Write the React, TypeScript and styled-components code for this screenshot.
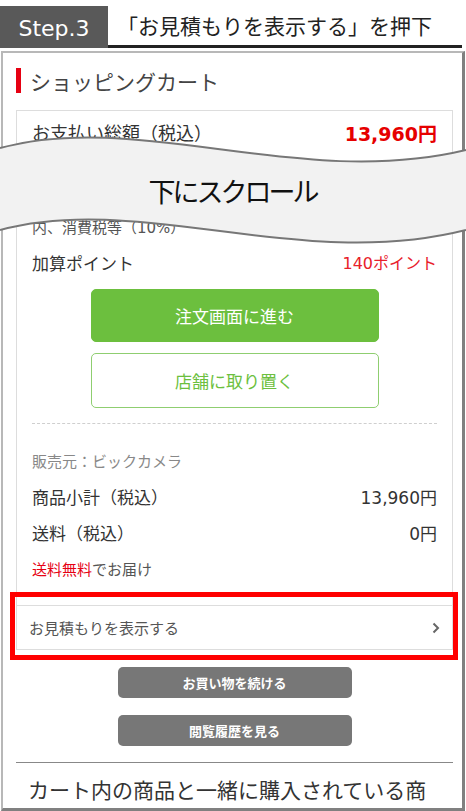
import React from "react";
import styled, { createGlobalStyle } from "styled-components";

const GlobalStyle = createGlobalStyle`
  html, body { margin: 0; padding: 0; background: #fff; }
  body {
    font-family: "DejaVu Sans", "Noto Sans CJK JP", sans-serif;
    color: #333;
    width: 466px;
    height: 811px;
    overflow: hidden;
  }
  * { box-sizing: border-box; }
`;

const Page = styled.div`
  position: relative;
  width: 466px;
  height: 811px;
  overflow: hidden;
`;

const Header = styled.header`
  display: flex;
  align-items: stretch;
  padding-top: 6px;
  height: 48px;
`;

const StepBadge = styled.div`
  width: 108px;
  background: #595959;
  color: #fff;
  font-size: 22px;
  display: flex;
  align-items: center;
  justify-content: center;
  padding-top: 2px;
`;

const HeaderTitle = styled.h1`
  flex: 1;
  margin: 0 4px 0 0;
  padding-left: 9px;
  border-bottom: 3px solid #222;
  font-family: "Noto Sans CJK JP", sans-serif;
  font-size: 21px;
  font-weight: normal;
  color: #222;
  line-height: 38px;
  white-space: nowrap;
`;

const Frame = styled.section`
  margin: 3px 1px 0 1px;
  height: 760px;
  border: 2px solid #b8b8b8;
  border-right: 3px solid #808080;
  border-bottom: 3px solid #808080;
  overflow: hidden;
  padding: 0 9px 0 13px;
`;

const SectionTitle = styled.h2`
  display: flex;
  align-items: center;
  gap: 9px;
  margin: 15px 0 17px;
  height: 25px;
  font-family: "Noto Sans CJK JP", sans-serif;
  font-size: 21px;
  font-weight: normal;
  color: #444;
  &::before {
    content: "";
    width: 5px;
    height: 25px;
    background: #e60012;
  }
`;

const Card = styled.div`
  border: 1px solid #ddd;
  padding: 0 15px;
`;

const Row = styled.div<{ $h: number; $size: number; $color?: string }>`
  display: flex;
  justify-content: space-between;
  align-items: center;
  height: ${(p) => p.$h}px;
  font-size: ${(p) => p.$size}px;
  color: ${(p) => p.$color ?? "#333"};
  white-space: nowrap;
`;

const Value = styled.span<{ $size: number; $bold?: boolean; $color?: string }>`
  font-size: ${(p) => p.$size}px;
  font-weight: ${(p) => (p.$bold ? "bold" : "normal")};
  color: ${(p) => p.$color ?? "#333"};
`;

const Red = styled.span`
  color: #e60012;
`;

const CutGap = styled.div`
  height: 61px;
`;

const ButtonStack = styled.div`
  display: flex;
  flex-direction: column;
  align-items: center;
  gap: 11px;
  margin-top: 3px;
`;

const GreenButton = styled.button<{ $outline?: boolean }>`
  width: 288px;
  height: ${(p) => (p.$outline ? 55 : 53)}px;
  border-radius: 5px;
  border: 1px solid ${(p) => (p.$outline ? "#8fce70" : "#6cbf3e")};
  background: ${(p) => (p.$outline ? "#fff" : "#6cbf3e")};
  color: ${(p) => (p.$outline ? "#6cbf3e" : "#fff")};
  font-family: "Noto Sans CJK JP", sans-serif;
  font-size: 17px;
  padding: 0;
  cursor: pointer;
`;

const Dashed = styled.hr`
  margin: 15px 0 18px;
  border: none;
  border-top: 1px dashed #cfcfcf;
  height: 0;
`;

const EstimateRow = styled.div`
  position: relative;
  display: flex;
  align-items: center;
  justify-content: space-between;
  margin: 19px -15px 0;
  height: 44px;
  border-top: 1px solid #ddd;
  padding: 0 12px 0 12px;
  font-size: 15px;
  color: #555;
`;

const Highlight = styled.div`
  position: absolute;
  left: -7px;
  right: -6px;
  top: -14px;
  bottom: -11px;
  border: 5px solid #ff0000;
  pointer-events: none;
`;

const Actions = styled.div`
  display: flex;
  flex-direction: column;
  align-items: center;
  gap: 17px;
  margin-top: 17px;
`;

const GrayButton = styled.button`
  width: 234px;
  height: 31px;
  border: none;
  border-radius: 5px;
  background: #777;
  color: #fff;
  font-family: "Noto Sans CJK JP", sans-serif;
  font-size: 13px;
  font-weight: bold;
  padding: 0;
`;

const Divider = styled.hr`
  margin: 16px 0 0;
  border: none;
  border-top: 1px solid #888;
  height: 0;
`;

const BottomHeading = styled.h3`
  margin: 11px 0 0;
  padding: 0 15px 0 12px;
  font-family: "Noto Sans CJK JP", sans-serif;
  font-size: 21px;
  font-weight: normal;
  line-height: 30px;
  color: #333;
`;

const Banner = styled.div`
  position: absolute;
  left: 0;
  top: 125px;
  width: 462px;
  height: 130px;
  display: flex;
  align-items: center;
  justify-content: center;
`;

const BannerArt = styled.svg`
  position: absolute;
  inset: 0;
  overflow: visible;
`;

const BannerText = styled.span`
  position: relative;
  font-family: "Noto Sans CJK JP", sans-serif;
  font-size: 27px;
  letter-spacing: -3px;
  color: #111;
  margin-left: 3px;
`;

const Chevron = () => (
  <svg width="8" height="12" viewBox="0 0 8 12">
    <polyline points="1.5,1.5 6,6 1.5,10.5" fill="none" stroke="#666" strokeWidth="2" />
  </svg>
);

export default function App() {
  return (
    <Page>
      <GlobalStyle />
      <Header>
        <StepBadge>Step.3</StepBadge>
        <HeaderTitle>「お見積もりを表示する」を押下</HeaderTitle>
      </Header>
      <Frame>
        <SectionTitle>ショッピングカート</SectionTitle>
        <Card>
          <Row $h={42} $size={18}>
            <span>お支払い総額（税込）</span>
            <Value $size={19} $bold $color="#e60000">13,960円</Value>
          </Row>
          <CutGap />
          <Row $h={24} $size={15} $color="#555">
            <span>内、消費税等（10%）</span>
          </Row>
          <Row $h={48} $size={17}>
            <span>加算ポイント</span>
            <Value $size={16} $color="#e8202a">140ポイント</Value>
          </Row>
          <ButtonStack>
            <GreenButton>注文画面に進む</GreenButton>
            <GreenButton $outline>店舗に取り置く</GreenButton>
          </ButtonStack>
          <Dashed />
          <Row $h={36} $size={15} $color="#888">
            <span>販売元：ビックカメラ</span>
          </Row>
          <Row $h={36} $size={17}>
            <span>商品小計（税込）</span>
            <Value $size={17}>13,960円</Value>
          </Row>
          <Row $h={36} $size={17}>
            <span>送料（税込）</span>
            <Value $size={17}>0円</Value>
          </Row>
          <Row $h={36} $size={15} $color="#555">
            <span>
              <Red>送料無料</Red>でお届け
            </span>
          </Row>
          <EstimateRow>
            <span>お見積もりを表示する</span>
            <Chevron />
            <Highlight />
          </EstimateRow>
        </Card>
        <Actions>
          <GrayButton>お買い物を続ける</GrayButton>
          <GrayButton>閲覧履歴を見る</GrayButton>
        </Actions>
        <Divider />
        <BottomHeading>カート内の商品と一緒に購入されている商品</BottomHeading>
      </Frame>
      <Banner>
        <BannerArt width="462" height="130" viewBox="0 0 462 130">
          <path
            d="M0 23 C140 -15 300 65 466 25 L466 105 C300 147 140 67 0 105 Z"
            fill="#f2f2f2"
          />
          <path d="M0 23 C140 -15 300 65 466 25" fill="none" stroke="#777" strokeWidth="2" />
          <path d="M0 105 C140 67 300 147 466 105" fill="none" stroke="#777" strokeWidth="2" />
        </BannerArt>
        <BannerText>下にスクロール</BannerText>
      </Banner>
    </Page>
  );
}
